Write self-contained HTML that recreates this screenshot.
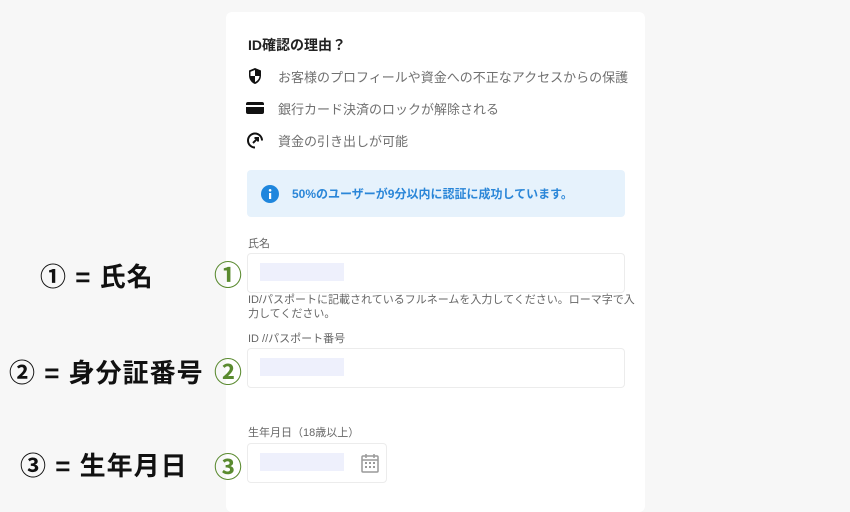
<!DOCTYPE html>
<html><head><meta charset="utf-8"><style>
body{margin:0;width:850px;height:500px;background:#f7f7f7;position:relative;overflow:hidden;font-family:"Liberation Sans","Noto Sans CJK JP",sans-serif;}
.a{position:absolute;white-space:nowrap}
.card{position:absolute;left:226px;top:12px;width:419px;height:500px;background:#fff;border-radius:6px}
.row{font-size:13px;color:#707070}
.inp{position:absolute;background:#fff;border:1px solid #ececec;border-radius:4px}
.ph{position:absolute;left:12px;top:9px;width:84px;height:18px;background:#eef0fc}
.lbl{font-size:11px;color:#666}
.big{font-size:26px;font-weight:bold;color:#111;letter-spacing:1px}
.g{font-size:28px;color:#5a8a2f;font-weight:bold}
</style></head><body>
<div class="card"></div>
<div class="a" style="left:248px;top:35px;font-size:14px;font-weight:bold;color:#222">ID確認の理由？</div>
<svg class="a" style="left:247px;top:67px" width="16" height="18" viewBox="0 0 16 18"><path d="M8 1L2 3.5V8.5C2 12.5 4.6 15.8 8 17C11.4 15.8 14 12.5 14 8.5V3.5Z" fill="#111"/><path d="M8 3V9H12.5C12.2 11.8 10.5 14 8 15V9H3.5V4.8Z" fill="#fff"/></svg>
<div class="a row" style="left:278px;top:67px">お客様のプロフィールや資金への不正なアクセスからの保護</div>
<svg class="a" style="left:246px;top:101px" width="18" height="14"><rect x="0" y="1" width="18" height="12" rx="2" fill="#111"/><rect x="0" y="4" width="18" height="2" fill="#fff"/></svg>
<div class="a row" style="left:278px;top:99px">銀行カード決済のロックが解除される</div>
<svg class="a" style="left:246px;top:131px" width="18" height="18" viewBox="0 0 18 18"><path d="M9 16.5A7 7 0 1 1 16 9.5" fill="none" stroke="#111" stroke-width="2"/><path d="M7 12L12 7M8.5 7H12V10.5" fill="none" stroke="#111" stroke-width="2"/></svg>
<div class="a row" style="left:278px;top:131px">資金の引き出しが可能</div>
<div class="a" style="left:247px;top:170px;width:378px;height:47px;background:#e6f2fc;border-radius:4px"></div>
<svg class="a" style="left:261px;top:185px" width="18" height="18"><circle cx="9" cy="9" r="9" fill="#1f86dd"/><rect x="8" y="8" width="2.2" height="6" fill="#fff"/><circle cx="9.1" cy="5.3" r="1.3" fill="#fff"/></svg>
<div class="a" style="left:292px;top:185px;font-size:12px;font-weight:bold;color:#2a86d8">50%のユーザーが9分以内に認証に成功しています。</div>
<div class="a lbl" style="left:248px;top:235px">氏名</div>
<div class="inp" style="left:247px;top:253px;width:376px;height:38px"><div class="ph"></div></div>
<div class="a lbl" style="left:248px;top:293px;line-height:14px;white-space:normal;width:392px">ID/パスポートに記載されているフルネームを入力してください。ローマ字で入力してください。</div>
<div class="a lbl" style="left:248px;top:330px">ID //パスポート番号</div>
<div class="inp" style="left:247px;top:348px;width:376px;height:38px"><div class="ph"></div></div>
<div class="a lbl" style="left:248px;top:424px">生年月日（18歳以上）</div>
<div class="inp" style="left:247px;top:443px;width:138px;height:38px"><div class="ph"></div>
<svg style="position:absolute;left:113px;top:9px" width="18" height="20"><rect x="1" y="3" width="16" height="16" rx="1" fill="none" stroke="#999" stroke-width="1.5"/><path d="M5 1V5M13 1V5M1 7H17" stroke="#999" stroke-width="1.5"/><g fill="#999"><rect x="4" y="9" width="2" height="2"/><rect x="8" y="9" width="2" height="2"/><rect x="12" y="9" width="2" height="2"/><rect x="4" y="13" width="2" height="2"/><rect x="8" y="13" width="2" height="2"/><rect x="12" y="13" width="2" height="2"/></g></svg></div>
<div class="a big" style="left:40px;top:257px">① = 氏名</div>
<div class="a big" style="left:9px;top:353px">② = 身分証番号</div>
<div class="a big" style="left:20px;top:446px">③ = 生年月日</div>
<div class="a g" style="left:214px;top:254px">①</div>
<div class="a g" style="left:214px;top:351px">②</div>
<div class="a g" style="left:214px;top:446px">③</div>
</body></html>
